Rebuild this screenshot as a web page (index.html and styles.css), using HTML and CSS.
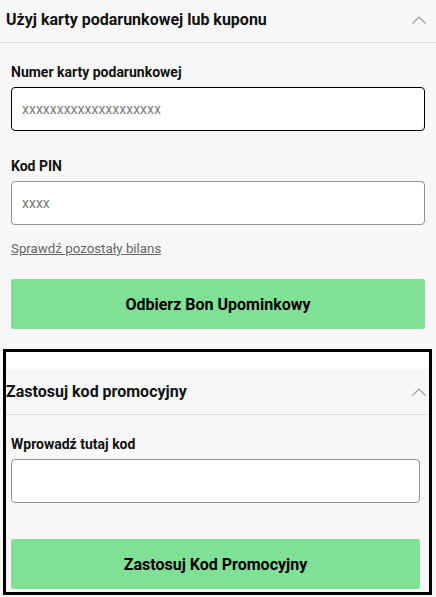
FILE: index.html
```html
<!DOCTYPE html>
<html lang="pl">
<head>
<meta charset="utf-8">
<title>Karta podarunkowa</title>
<link rel="stylesheet" href="styles.css">
</head>
<body>
<div class="page">
  <section class="panel">
    <div class="panel-head">
      <h2 class="panel-title">Użyj karty podarunkowej lub kuponu</h2>
      <svg class="chevron" width="14" height="8" viewBox="0 0 14 8"><path d="M0.5 7.5 L7 1 L13.5 7.5" fill="none" stroke="#9c9c9c" stroke-width="1.2"/></svg>
    </div>
    <div class="panel-body">
      <div class="field">
        <label class="label" for="card">Numer karty podarunkowej</label>
        <input id="card" class="input input-focused" type="text" placeholder="xxxxxxxxxxxxxxxxxxxx" autofocus>
      </div>
      <div class="field">
        <label class="label" for="pin">Kod PIN</label>
        <input id="pin" class="input" type="text" placeholder="xxxx">
      </div>
      <a class="link" href="#">Sprawdź pozostały bilans</a>
      <button class="btn btn-gift" type="button">Odbierz Bon Upominkowy</button>
    </div>
  </section>

  <section class="panel panel-framed">
    <div class="panel-inner">
      <div class="panel-head panel-head-framed">
        <h2 class="panel-title">Zastosuj kod promocyjny</h2>
        <svg class="chevron" width="14" height="8" viewBox="0 0 14 8"><path d="M0.5 7.5 L7 1 L13.5 7.5" fill="none" stroke="#9c9c9c" stroke-width="1.2"/></svg>
      </div>
      <div class="panel-body panel-body-framed">
        <div class="field">
          <label class="label" for="promo">Wprowadź tutaj kod</label>
          <input id="promo" class="input" type="text">
        </div>
        <button class="btn btn-promo" type="button">Zastosuj Kod Promocyjny</button>
      </div>
    </div>
  </section>
</div>
</body>
</html>
```

FILE: styles.css
```css
html, body {
  margin: 0;
  padding: 0;
  background: #f7f7f7;
}

body {
  font-family: Roboto, "Liberation Sans", Arial, sans-serif;
  color: #111;
  overflow: hidden;
}

.page {
  margin-top: -3px;
}

.panel-head {
  height: 45px;
  display: flex;
  align-items: center;
  justify-content: space-between;
  padding: 0 10px 0 6px;
  border-bottom: 1px solid #dedede;
}

.panel-title {
  margin: 0;
  font-size: 16px;
  line-height: 20px;
  font-weight: 700;
  color: #111;
}

.chevron {
  display: block;
  flex: none;
}

.panel-body {
  padding: 19px 11px 20px;
  display: flex;
  flex-direction: column;
}

.field {
  display: flex;
  flex-direction: column;
}

.field + .field {
  margin-top: 25px;
}

.label {
  font-size: 14px;
  line-height: 20px;
  font-weight: 700;
  color: #111;
  margin-bottom: 5px;
}

.input {
  box-sizing: border-box;
  height: 44px;
  width: 100%;
  margin: 0;
  border: 1px solid #939393;
  border-radius: 4px;
  background: #fff;
  padding: 0 10px;
  font-family: Roboto, "Liberation Sans", Arial, sans-serif;
  font-size: 14px;
  color: #222;
  outline: none;
}

.input::placeholder {
  color: #7a7a7a;
}

.input-focused,
.input:focus {
  border-color: #000;
}

.link {
  margin-top: 15px;
  align-self: flex-start;
  font-size: 13.3px;
  line-height: 18px;
  color: #666;
  text-decoration: underline;
}

.btn {
  box-sizing: border-box;
  height: 50px;
  width: 100%;
  border: none;
  border-radius: 3px;
  background: #80e096;
  color: #000;
  font-family: Roboto, "Liberation Sans", Arial, sans-serif;
  font-size: 16px;
  font-weight: 700;
  cursor: pointer;
}

.btn-gift {
  margin-top: 21px;
}

.panel-framed {
  margin: 0 4px 0 3px;
  border: 3px solid #000;
  background: #fff;
  padding-top: 17px;
}

.panel-inner {
  background: #f7f7f7;
}

.panel-head-framed {
  padding: 0 3px 0 0;
}

.panel-body-framed {
  padding: 19px 9px 3px 5px;
}

.btn-promo {
  margin-top: 36px;
}
```
